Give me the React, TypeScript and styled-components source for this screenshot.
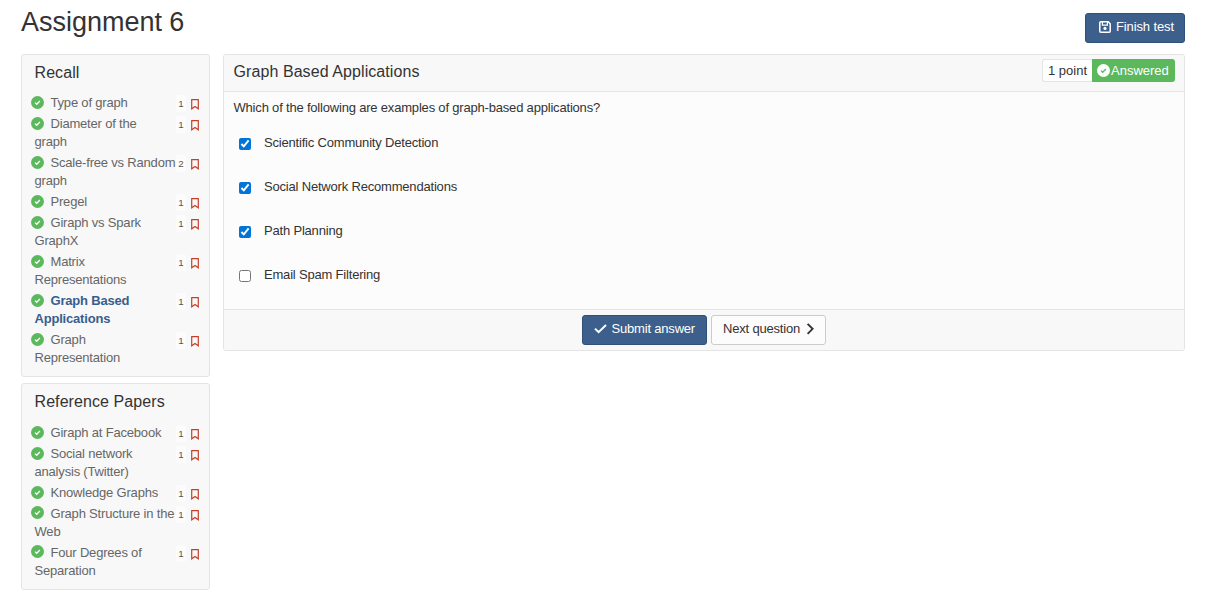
import React from 'react';
import styled, { createGlobalStyle, css } from 'styled-components';

const GlobalStyle = createGlobalStyle`
  *, *::before, *::after { box-sizing: border-box; }
  body {
    margin: 0;
    background: #fff;
    color: #333;
    font: 13px/18.57px "Liberation Sans", Arial, sans-serif;
    letter-spacing: -0.19px;
  }
  svg { display: block; flex: none; }
`;

const Page = styled.div`
  width: 1208px;
  min-height: 611px;
  padding: 0 23px 0 21px;
`;

const TopBar = styled.header`
  display: flex;
  justify-content: space-between;
  height: 54px;
`;

const PageTitle = styled.h1`
  margin: 7px 0 0;
  font-size: 27px;
  line-height: 31px;
  font-weight: 400;
  letter-spacing: -0.02px;
`;

const Columns = styled.div`
  display: grid;
  grid-template-columns: 189px 962px;
  column-gap: 13px;
  align-items: start;
`;

const Sidebar = styled.nav`
  display: flex;
  flex-direction: column;
  gap: 6px;
`;

const Section = styled.section<{ $height: number }>`
  height: ${(p) => p.$height}px;
  padding: 9px 9px 0 12.5px;
  border: 1px solid #e4e4e4;
  border-radius: 3px;
  background: #f8f8f8;
`;

const SectionTitle = styled.h2<{ $gap: number }>`
  margin: 0 0 ${(p) => p.$gap}px;
  font-size: 16px;
  line-height: 18px;
  font-weight: 400;
  letter-spacing: 0.08px;
`;

const Items = styled.ul`
  margin: 0;
  padding: 0;
  list-style: none;
`;

const Item = styled.li<{ $active?: boolean }>`
  display: flex;
  align-items: flex-start;
  justify-content: space-between;
  margin-bottom: 2.6px;
  color: #666;
  line-height: 18.2px;
  ${(p) => p.$active && css`
    color: #3a5e8c;
    font-weight: 700;
  `}
`;

const ItemText = styled.div`
  width: 142px;
  white-space: nowrap;
`;

const FirstLine = styled.div`
  display: flex;
  align-items: flex-start;
  gap: 7px;
  margin-left: -4px;

  svg { margin-top: 1.9px; }
`;

const ItemSide = styled.div`
  display: flex;
  align-items: flex-start;
  gap: 5px;
  padding: 1px 1px 0 0;
`;

const Score = styled.span`
  width: 10px;
  height: 17px;
  border-radius: 2px;
  background: #fcfcfc;
  color: #555;
  font-size: 9.75px;
  font-weight: 400;
  line-height: 17px;
  letter-spacing: 0;
  text-align: center;
`;

const BookmarkSvg = styled.svg`
  margin-top: 4px;
`;

const Card = styled.main`
  border: 1px solid #e4e4e4;
  border-radius: 3px;
  background: #fcfcfc;
  overflow: hidden;
`;

const CardHeader = styled.div`
  display: flex;
  justify-content: space-between;
  height: 37px;
  padding: 4px 9px 0 9.5px;
  border-bottom: 1px solid #e4e4e4;
  background: #f8f8f8;
`;

const QuestionTitle = styled.h2`
  margin: 4px 0 0;
  font-size: 16px;
  line-height: 18px;
  font-weight: 400;
  letter-spacing: 0.08px;
`;

const Status = styled.div`
  display: flex;
  height: 23px;
  line-height: 23px;
  letter-spacing: 0;
`;

const Points = styled.span`
  width: 50px;
  padding-left: 5px;
  border: 1px solid #e4e4e4;
  border-right: 0;
  border-radius: 3px 0 0 3px;
  background: #fff;
  line-height: 21px;
  white-space: nowrap;
`;

const Answered = styled.span`
  display: flex;
  align-items: center;
  gap: 1px;
  width: 83px;
  padding-left: 5px;
  border-radius: 0 3px 3px 0;
  background: #5cb85c;
  color: #fff;
`;

const CardBody = styled.div`
  height: 217px;
  padding: 7px 9.5px 0;
`;

const Prompt = styled.p`
  margin: 0 0 16px;
`;

const Option = styled.label`
  display: flex;
  align-items: flex-start;
  height: 44px;
  padding-left: 5.5px;
`;

const Checkbox = styled.input`
  width: 12px;
  height: 12px;
  margin: 4px 13px 0 0;
  accent-color: #0075d7;
`;

const CardFooter = styled.div`
  display: flex;
  justify-content: center;
  gap: 4px;
  height: 41px;
  padding-top: 5px;
  border-top: 1px solid #e4e4e4;
  background: #f8f8f8;
`;

const Button = styled.button<{ $primary?: boolean; $width: number }>`
  display: flex;
  align-items: center;
  gap: 5px;
  width: ${(p) => p.$width}px;
  height: 30px;
  padding: 0 0 2px 11px;
  border: 1px solid ${(p) => (p.$primary ? '#2f5078' : '#ccc')};
  border-radius: 3px;
  background: ${(p) => (p.$primary ? '#3d5f8c' : '#fcfcfc')};
  color: ${(p) => (p.$primary ? '#fff' : '#333')};
  font: inherit;
  letter-spacing: -0.19px;
  white-space: nowrap;
`;

const SubmitButton = styled(Button)`
  padding-left: 10.5px;
`;

const NextButton = styled(Button)`
  gap: 6px;
`;

const FinishButton = styled(Button)`
  margin-top: 13px;
  padding-left: 13px;
  letter-spacing: -0.12px;
`;

type Entry = { lines: string[]; score: number; active?: boolean };

const recall: Entry[] = [
  { lines: ['Type of graph'], score: 1 },
  { lines: ['Diameter of the', 'graph'], score: 1 },
  { lines: ['Scale-free vs Random', 'graph'], score: 2 },
  { lines: ['Pregel'], score: 1 },
  { lines: ['Giraph vs Spark', 'GraphX'], score: 1 },
  { lines: ['Matrix', 'Representations'], score: 1 },
  { lines: ['Graph Based', 'Applications'], score: 1, active: true },
  { lines: ['Graph', 'Representation'], score: 1 },
];

const papers: Entry[] = [
  { lines: ['Giraph at Facebook'], score: 1 },
  { lines: ['Social network', 'analysis (Twitter)'], score: 1 },
  { lines: ['Knowledge Graphs'], score: 1 },
  { lines: ['Graph Structure in the', 'Web'], score: 1 },
  { lines: ['Four Degrees of', 'Separation'], score: 1 },
];

const options = [
  { text: 'Scientific Community Detection', checked: true },
  { text: 'Social Network Recommendations', checked: true },
  { text: 'Path Planning', checked: true },
  { text: 'Email Spam Filtering', checked: false },
];

function CheckCircle({ fill, mark }: { fill: string; mark: string }) {
  return (
    <svg width="13" height="13" viewBox="0 0 13 13" fill="none">
      <circle cx="6.5" cy="6.5" r="6.5" fill={fill} />
      <path d="M4 6.6l1.7 1.7 3.2-3.3" stroke={mark} strokeWidth="1.3" />
    </svg>
  );
}

function SaveIcon() {
  return (
    <svg width="12" height="12" viewBox="0 0 12 12" fill="none" stroke="currentColor">
      <path d="M1.8.8h7.4l2 2v7.4a1 1 0 0 1-1 1H1.8a1 1 0 0 1-1-1V1.8a1 1 0 0 1 1-1z" strokeWidth="1.5" />
      <path d="M3.4 1v3.1h5V1" strokeWidth="1.2" />
      <circle cx="6" cy="7.4" r="1.6" fill="currentColor" stroke="none" />
    </svg>
  );
}

function CheckIcon() {
  return (
    <svg width="13" height="13" viewBox="0 0 13 13" fill="none" stroke="currentColor" strokeWidth="2">
      <path d="M1 5.6l3.6 3.6L12 2" />
    </svg>
  );
}

function ChevronIcon() {
  return (
    <svg width="9" height="13" viewBox="0 0 9 13" fill="none" stroke="currentColor" strokeWidth="1.9">
      <path d="M1.6 .8l5 5-5 5" />
    </svg>
  );
}

function Bookmark() {
  return (
    <BookmarkSvg width="8" height="11" viewBox="0 0 8 11" fill="none" stroke="#c5402c" strokeWidth="1.2">
      <path d="M.7.7h6.6v9.1L4 7.5.7 9.8z" />
    </BookmarkSvg>
  );
}

type TopicSectionProps = { title: string; items: Entry[]; height: number; titleGap: number };

function TopicSection({ title, items, height, titleGap }: TopicSectionProps) {
  return (
    <Section $height={height}>
      <SectionTitle $gap={titleGap}>{title}</SectionTitle>
      <Items>
        {items.map((item) => (
          <Item key={item.lines.join(' ')} $active={item.active}>
            <ItemText>
              <FirstLine>
                <CheckCircle fill="#5cb85c" mark="#fff" />
                {item.lines[0]}
              </FirstLine>
              {item.lines[1] && <div>{item.lines[1]}</div>}
            </ItemText>
            <ItemSide>
              <Score>{item.score}</Score>
              <Bookmark />
            </ItemSide>
          </Item>
        ))}
      </Items>
    </Section>
  );
}

export default function App() {
  return (
    <Page>
      <GlobalStyle />
      <TopBar>
        <PageTitle>Assignment 6</PageTitle>
        <FinishButton $primary $width={100}>
          <SaveIcon />
          Finish test
        </FinishButton>
      </TopBar>
      <Columns>
        <Sidebar>
          <TopicSection title="Recall" items={recall} height={323} titleGap={12.4} />
          <TopicSection title="Reference Papers" items={papers} height={207} titleGap={13} />
        </Sidebar>
        <Card>
          <CardHeader>
            <QuestionTitle>Graph Based Applications</QuestionTitle>
            <Status>
              <Points>1 point</Points>
              <Answered>
                <CheckCircle fill="#fff" mark="#5cb85c" />
                Answered
              </Answered>
            </Status>
          </CardHeader>
          <CardBody>
            <Prompt>Which of the following are examples of graph-based applications?</Prompt>
            {options.map((option) => (
              <Option key={option.text}>
                <Checkbox type="checkbox" defaultChecked={option.checked} />
                {option.text}
              </Option>
            ))}
          </CardBody>
          <CardFooter>
            <SubmitButton $primary $width={125}>
              <CheckIcon />
              Submit answer
            </SubmitButton>
            <NextButton $width={115}>
              Next question
              <ChevronIcon />
            </NextButton>
          </CardFooter>
        </Card>
      </Columns>
    </Page>
  );
}
